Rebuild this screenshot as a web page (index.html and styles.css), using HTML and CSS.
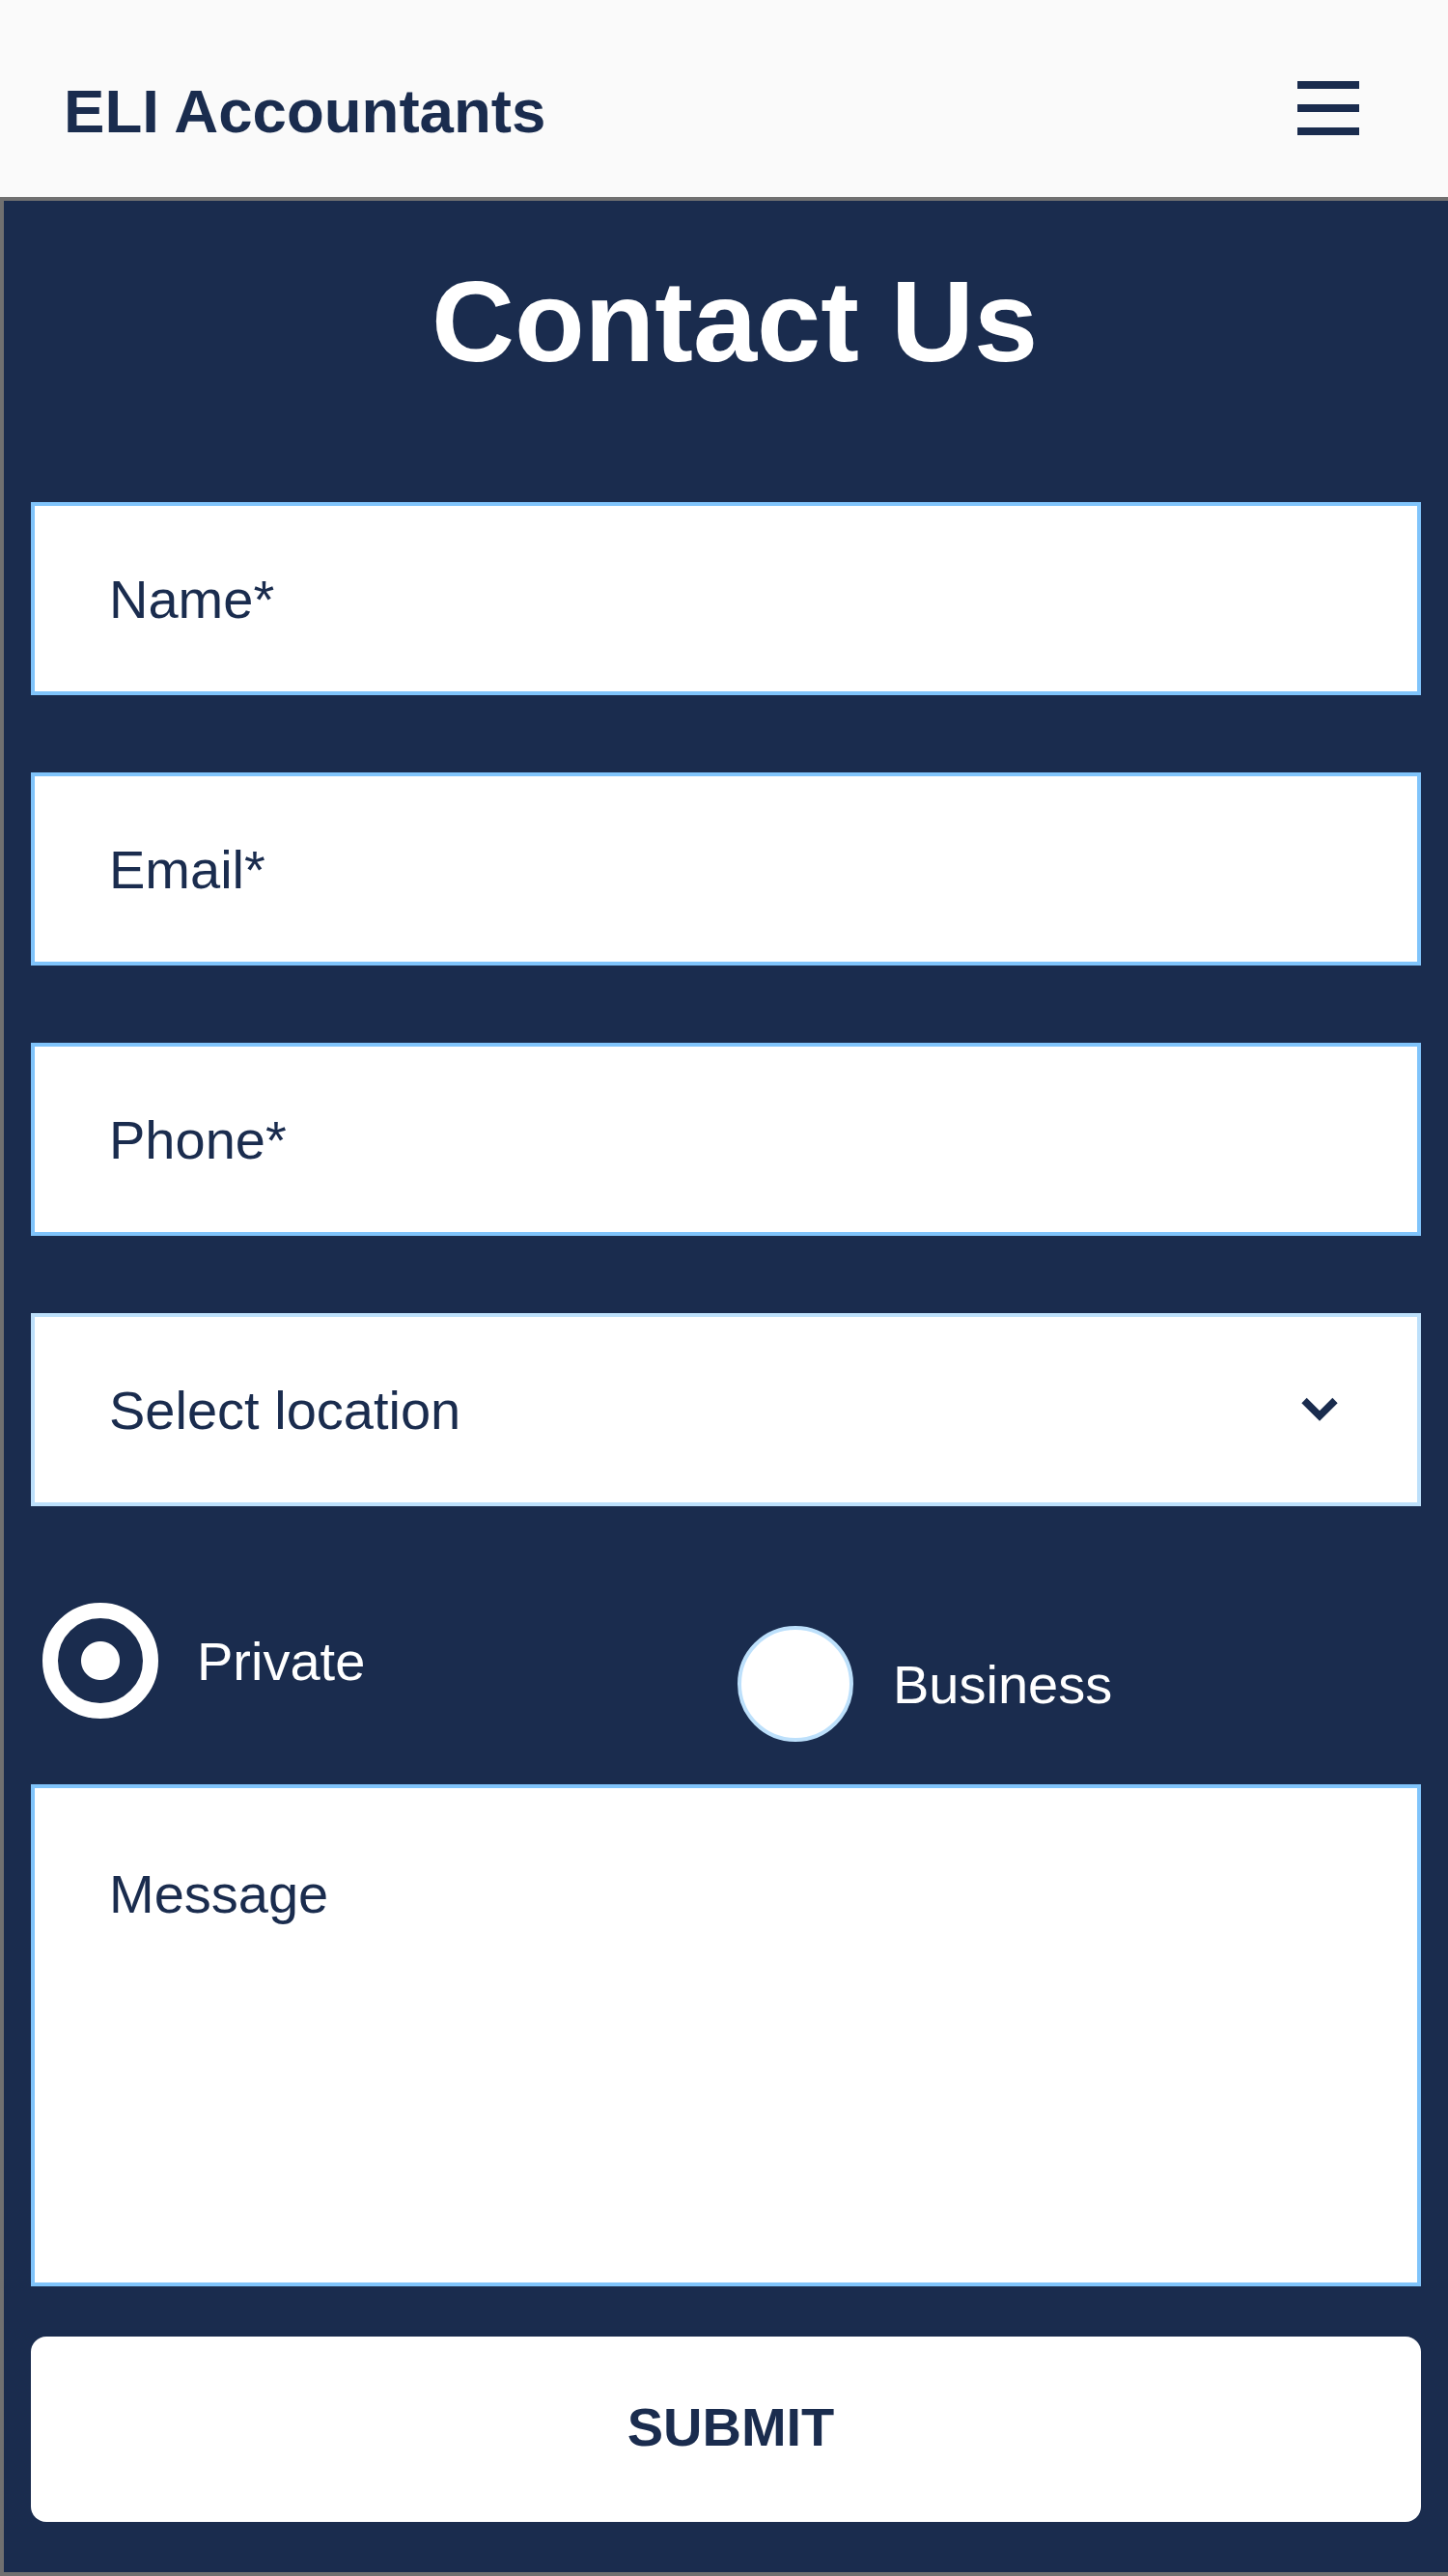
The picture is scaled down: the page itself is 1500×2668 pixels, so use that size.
FILE: index.html
```
<!DOCTYPE html>
<html lang="en">
<head>
<meta charset="utf-8">
<title>Contact Us - ELI Accountants</title>
<link rel="stylesheet" href="styles.css">
</head>
<body>
<header class="topbar">
  <div class="brand">ELI Accountants</div>
  <button class="menu" aria-label="Menu">
    <span class="bar"></span>
    <span class="bar"></span>
    <span class="bar"></span>
  </button>
</header>
<main class="contact">
  <h1 class="title">Contact Us</h1>
  <form class="form">
    <input class="field" type="text" placeholder="Name*">
    <input class="field" type="email" placeholder="Email*">
    <input class="field" type="tel" placeholder="Phone*">
    <div class="select-wrap">
      <select class="field select">
        <option>Select location</option>
      </select>
      <svg class="chevron" width="40" height="27" viewBox="0 0 40 27"><polyline points="4,4 20,20 36,4" fill="none" stroke="#1a2c4e" stroke-width="7.5"/></svg>
    </div>
    <div class="radios">
      <label class="radio-opt">
        <input class="radio" type="radio" name="kind" checked>
        <span class="radio-text">Private</span>
      </label>
      <label class="radio-opt lower">
        <input class="radio" type="radio" name="kind">
        <span class="radio-text">Business</span>
      </label>
    </div>
    <textarea class="message" placeholder="Message"></textarea>
    <button class="submit" type="button">SUBMIT</button>
  </form>
</main>
</body>
</html>
```
FILE: styles.css
```
* { box-sizing: border-box; }
html, body { margin: 0; padding: 0; }
body {
  font-family: "Liberation Sans", Arial, sans-serif;
  background: #1a2c4e;
  overflow-x: hidden;
}
.topbar {
  height: 204px;
  background: #fafafa;
  display: flex;
  align-items: center;
  justify-content: space-between;
  padding: 24px 92px 0 66px;
}
.brand {
  font-size: 63.6px;
  font-weight: 700;
  color: #1a2c4e;
}
.menu {
  width: 64px;
  height: 56px;
  margin: 0 0 4px 0;
  padding: 0;
  border: none;
  background: none;
  display: flex;
  flex-direction: column;
  justify-content: space-between;
}
.bar {
  display: block;
  width: 64px;
  height: 8px;
  background: #1a2c4e;
}
.contact {
  background: #1a2c4e;
  border: 4px solid #707070;
  border-right: none;
  padding: 56px 28px 52px 28px;
}
.title {
  margin: 0 0 118px 0;
  font-size: 119px;
  line-height: 138px;
  font-weight: 700;
  color: #fff;
  text-align: center;
  padding-left: 18px;
}
.form {
  display: flex;
  flex-direction: column;
}
.field {
  display: block;
  width: 100%;
  height: 200px;
  margin: 0 0 80px 0;
  padding: 0 0 0 77px;
  border: 4px solid #80c4fb;
  border-radius: 0;
  background: #fff;
  font-family: "Liberation Sans", Arial, sans-serif;
  font-size: 56px;
  color: #1a2c4e;
  outline: none;
}
.field::placeholder, .message::placeholder {
  color: #1a2c4e;
  opacity: 1;
}
.select-wrap {
  position: relative;
  margin-bottom: 100px;
}
.select {
  margin: 0;
  appearance: none;
  -webkit-appearance: none;
  border-color: #bde0fb;
  padding-left: 77px;
}
.chevron {
  position: absolute;
  right: 85px;
  top: 50%;
  transform: translateY(-50%);
}
.radios {
  display: grid;
  grid-template-columns: 1fr 1fr;
  align-items: start;
  margin-bottom: 44px;
}
.radio-opt {
  display: flex;
  align-items: center;
  gap: 40px;
  padding-left: 12px;
}
.radio-opt.lower { margin-top: 24px; gap: 41px; }
.radio {
  appearance: none;
  -webkit-appearance: none;
  margin: 0;
  width: 120px;
  height: 120px;
  flex: none;
  border-radius: 50%;
  background: #fff;
  border: 4px solid #bde0fb;
}
.radio:checked {
  border: 16px solid #fff;
  background: radial-gradient(circle, #fff 0 19.5px, #1a2c4e 20.5px);
}
.radio-text {
  font-size: 56px;
  color: #fff;
}
.message {
  display: block;
  width: 100%;
  height: 520px;
  margin: 0 0 52px 0;
  padding: 77px 40px 0 77px;
  border: 4px solid #80c4fb;
  border-radius: 0;
  background: #fff;
  font-family: "Liberation Sans", Arial, sans-serif;
  font-size: 56px;
  color: #1a2c4e;
  resize: none;
  outline: none;
}
.submit {
  display: block;
  width: 100%;
  height: 192px;
  border: none;
  border-radius: 16px;
  background: #fff;
  font-family: "Liberation Sans", Arial, sans-serif;
  font-size: 56px;
  font-weight: 700;
  color: #1a2c4e;
  padding: 0 0 6px 10px;
}
```
